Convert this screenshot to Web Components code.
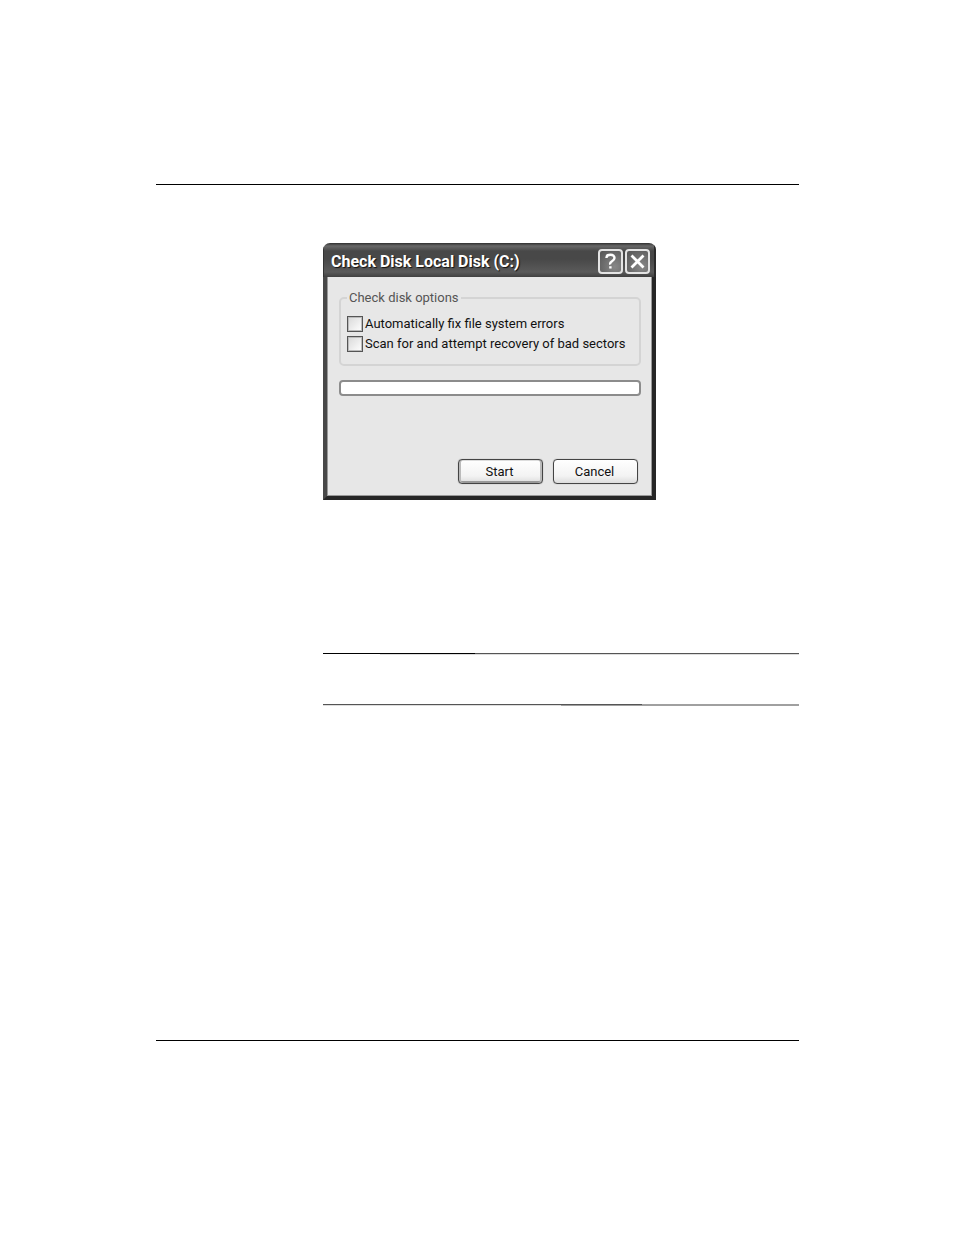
<!DOCTYPE html>
<html lang="en">
<head>
<meta charset="utf-8">
<meta name="viewport" content="width=device-width, initial-scale=1">
<title>Check Disk</title>
<style>
  body {
    margin: 0;
    background: #fff;
    font-family: Roboto, "Noto Sans", sans-serif;
  }
</style>
</head>
<body>
<manual-page>
  <xp-dialog heading="Check Disk Local Disk (C:)">
    <option-group legend="Check disk options">
      <check-option label="Automatically fix file system errors"></check-option>
      <check-option label="Scan for and attempt recovery of bad sectors"></check-option>
    </option-group>
    <disk-progress></disk-progress>
    <xp-button slot="actions" primary>Start</xp-button>
    <xp-button slot="actions">Cancel</xp-button>
  </xp-dialog>
  <note-rules></note-rules>
</manual-page>

<script>
class ManualPage extends HTMLElement {
  constructor() {
    super();
    this.attachShadow({ mode: 'open' });
    this.shadowRoot.innerHTML = `
      <style>
        :host {
          display: block;
          padding: 184px 155px 194px 156px;
        }

        main {
          box-sizing: border-box;
          min-height: 857px;
          padding: 58px 0 0 167px;
          border-top: 1px solid #000;
          border-bottom: 1px solid #000;
        }
      </style>
      <main><slot></slot></main>
    `;
  }
}

class XpDialog extends HTMLElement {
  constructor() {
    super();
    this.attachShadow({ mode: 'open' });
  }

  connectedCallback() {
    this.shadowRoot.innerHTML = `
      <style>
        :host {
          display: block;
          max-width: 333px;
        }

        .window {
          border-radius: 7px 7px 0 0;
          overflow: hidden;
        }

        header {
          display: flex;
          align-items: center;
          gap: 2px;
          height: 34px;
          box-sizing: border-box;
          padding: 3px 6px 0 8px;
          background: linear-gradient(#303030, #686868 3px, #484848 8px, #484848 16px, #5a5a5a 29px, #404040);
          box-shadow: inset 1px 0 0 #333, inset -2px 0 0 #2a2a2a;
        }

        h1 {
          flex: 1;
          margin: 0;
          color: #fff;
          font: bold 16px/22px Roboto, sans-serif;
          text-shadow: 1px 1px 1px #111;
          white-space: nowrap;
        }

        header button {
          width: 25px;
          height: 25px;
          padding: 0;
          border: 2px solid #e4e4e4;
          border-radius: 4px;
          background: radial-gradient(circle at 70% 75%, #888, #555);
        }

        svg {
          display: block;
          width: 21px;
          height: 21px;
          fill: none;
          stroke: #fff;
        }

        .body {
          padding: 12px 11px 12px 12px;
          border: 4px solid;
          border-color: #484848 #262626 #262626 #484848;
          border-top: 0;
          background: #e7e7e7;
          box-shadow: inset 1px -1px 0 #999, inset -1px 0 0 #999;
        }

        .actions {
          display: flex;
          justify-content: flex-end;
          gap: 10px;
          margin-top: 63px;
          padding-right: 3px;
        }
      </style>
      <section class="window">
        <header>
          <h1>${this.getAttribute('heading')}</h1>
          <button type="button" aria-label="Help">
            <svg viewBox="0 0 21 21"><path stroke-width="2.4" d="M6.5 7V6.5Q6.5 3.8 10.5 3.8T14.5 7Q14.5 8.7 12 10.2T10.4 13.5M10.4 15.2V17.6"/></svg>
          </button>
          <button type="button" aria-label="Close">
            <svg viewBox="0 0 21 21"><path stroke-width="2.8" d="M4.5 4.5L16.5 16.5M16.5 4.5L4.5 16.5"/></svg>
          </button>
        </header>
        <div class="body">
          <slot></slot>
          <div class="actions"><slot name="actions"></slot></div>
        </div>
      </section>
    `;
  }
}

class OptionGroup extends HTMLElement {
  constructor() {
    super();
    this.attachShadow({ mode: 'open' });
  }

  connectedCallback() {
    this.shadowRoot.innerHTML = `
      <style>
        :host {
          display: block;
        }

        fieldset {
          display: grid;
          gap: 4px;
          min-width: 0;
          margin: 0;
          padding: 9px 6px 12px;
          border: 2px solid #d4d4d4;
          border-radius: 5px;
        }

        legend {
          padding: 0 2px;
          color: #555;
          font-size: 13px;
          line-height: 18px;
        }
      </style>
      <fieldset>
        <legend>${this.getAttribute('legend')}</legend>
        <slot></slot>
      </fieldset>
    `;
  }
}

class CheckOption extends HTMLElement {
  constructor() {
    super();
    this.attachShadow({ mode: 'open' });
  }

  connectedCallback() {
    this.shadowRoot.innerHTML = `
      <style>
        :host {
          display: block;
        }

        label {
          display: flex;
          align-items: center;
          gap: 2px;
          color: #111;
          font-size: 13px;
          line-height: 16px;
          white-space: nowrap;
        }

        input {
          appearance: none;
          flex: none;
          width: 16px;
          height: 16px;
          margin: 0;
          border: 1px solid #555;
          background: linear-gradient(135deg, #d8d8d8, #fff);
          box-shadow: inset 0 0 0 1px #bbb;
        }
      </style>
      <label><input type="checkbox">${this.getAttribute('label')}</label>
    `;
  }
}

class DiskProgress extends HTMLElement {
  constructor() {
    super();
    this.attachShadow({ mode: 'open' });
    this.shadowRoot.innerHTML = `
      <style>
        :host {
          display: block;
          margin-top: 14px;
        }

        div {
          box-sizing: border-box;
          height: 16px;
          border: 2px solid #8c8c8c;
          border-radius: 4px;
          background: #fff;
        }
      </style>
      <div role="progressbar" aria-label="Check progress" aria-valuenow="0"></div>
    `;
  }
}

class XpButton extends HTMLElement {
  constructor() {
    super();
    this.attachShadow({ mode: 'open' });
    this.shadowRoot.innerHTML = `
      <style>
        :host {
          display: block;
        }

        button {
          display: block;
          width: 85px;
          height: 25px;
          padding: 0 2px 0 0;
          border: 1px solid #444;
          border-radius: 4px;
          background: linear-gradient(#fff, #f3f3f3 70%, #dcdcdc);
          box-shadow: 0 0 1px #888;
          color: #111;
          font: inherit;
          font-size: 13px;
          line-height: 16px;
        }

        :host([primary]) button {
          box-shadow: 0 0 1px #888, inset 2px 0 0 #bbb, inset -2px 0 0 #bbb, inset 0 -2px 0 #999, inset 0 1px 0 #ddd;
        }
      </style>
      <button type="button"><slot></slot></button>
    `;
  }
}

class NoteRules extends HTMLElement {
  constructor() {
    super();
    this.attachShadow({ mode: 'open' });
    this.shadowRoot.innerHTML = `
      <style>
        :host {
          display: block;
          margin-top: 153px;
        }

        .rule {
          height: 2px;
        }

        .top {
          background:
            linear-gradient(90deg, #000 32%, #555 32%) 0 0 / 100% 1px no-repeat,
            linear-gradient(90deg, #fff 12%, #ddd 12%) 0 1px / 100% 1px no-repeat;
        }

        .bottom {
          margin-top: 49px;
          background:
            linear-gradient(90deg, #555 67%, #a0a0a0 67%) 0 0 / 100% 1px no-repeat,
            linear-gradient(90deg, #ddd 50%, #a0a0a0 50%) 0 1px / 100% 1px no-repeat;
        }
      </style>
      <div class="rule top"></div>
      <div class="rule bottom"></div>
    `;
  }
}

customElements.define('manual-page', ManualPage);
customElements.define('xp-dialog', XpDialog);
customElements.define('option-group', OptionGroup);
customElements.define('check-option', CheckOption);
customElements.define('disk-progress', DiskProgress);
customElements.define('xp-button', XpButton);
customElements.define('note-rules', NoteRules);
</script>
</body>
</html>
